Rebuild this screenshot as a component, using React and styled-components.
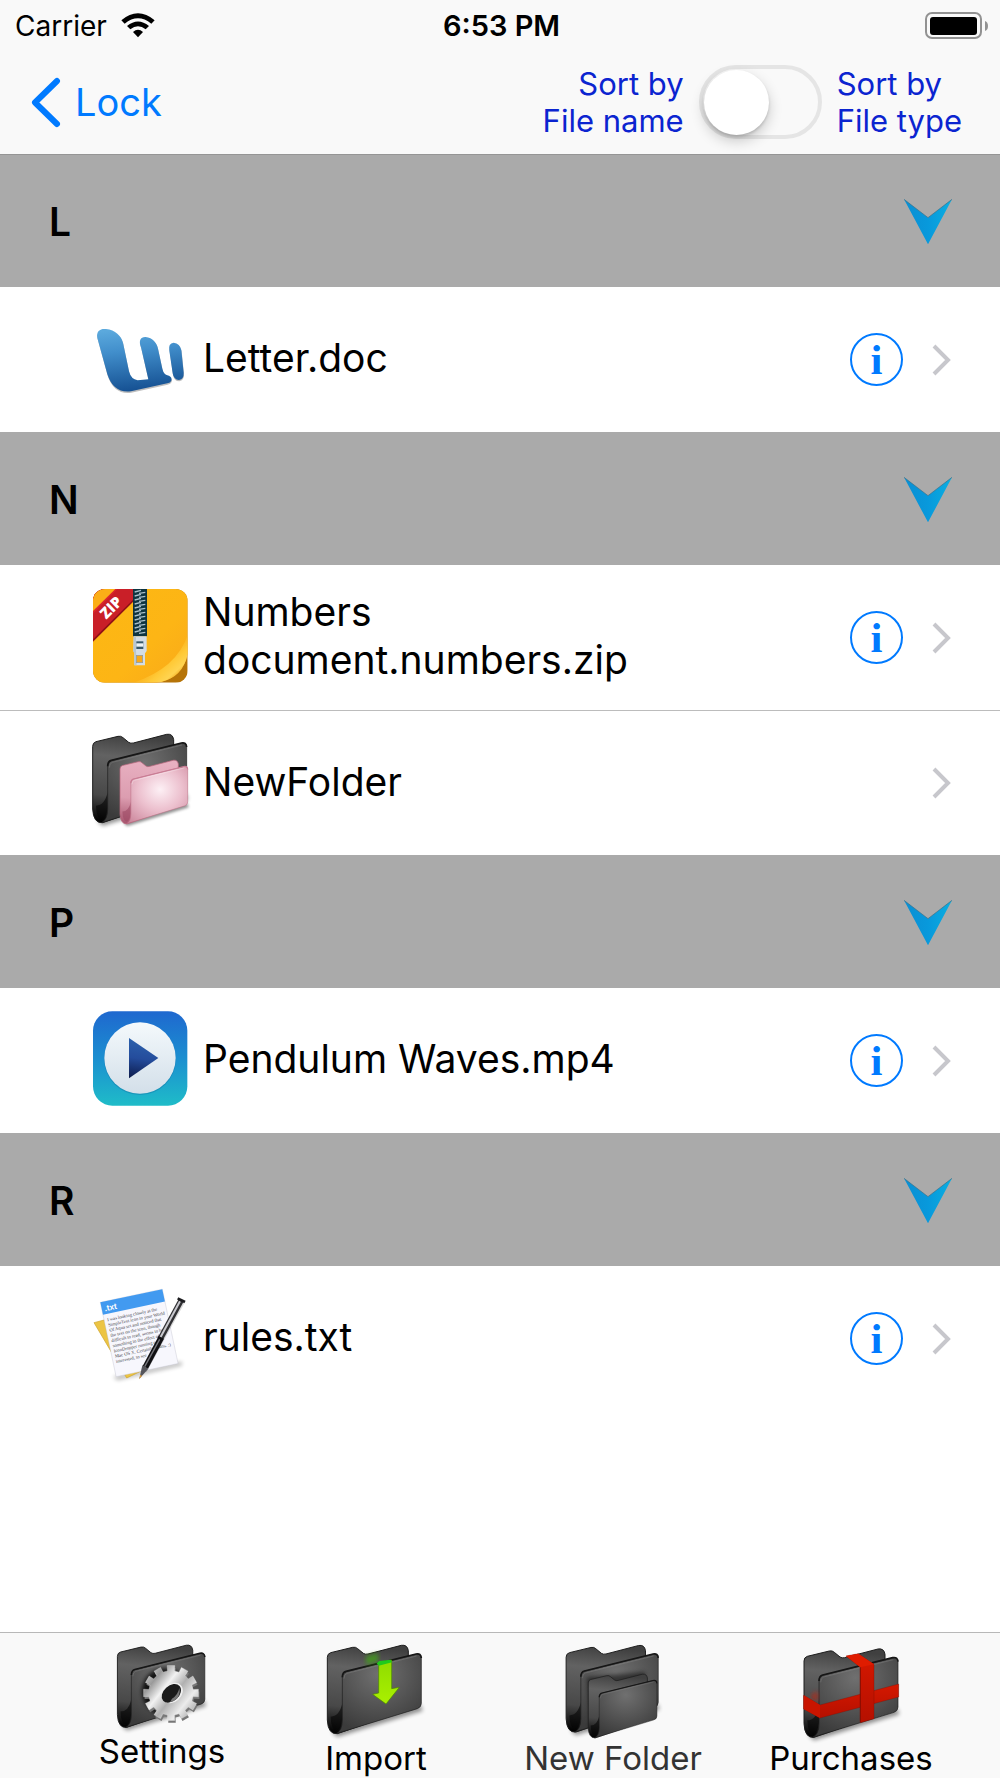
import { useState } from "react";
import styled, { createGlobalStyle } from "styled-components";

const sections = [
  { letter: "L", files: [{ name: "Letter.doc", icon: "doc", info: true }] },
  {
    letter: "N",
    files: [
      { name: "Numbers document.numbers.zip", icon: "zip", info: true },
      { name: "NewFolder", icon: "folder", info: false },
    ],
  },
  { letter: "P", files: [{ name: "Pendulum Waves.mp4", icon: "video", info: true }] },
  { letter: "R", files: [{ name: "rules.txt", icon: "text", info: true }] },
];

export default function App() {
  const [byType, setByType] = useState(false);
  const [closed, setClosed] = useState({});

  const toggleSection = (letter) => {
    setClosed({ ...closed, [letter]: !closed[letter] });
  };

  return (
    <Page>
      <GlobalStyle />
      <SharedGradients />
      <Header>
        <StatusBar>
          <Carrier>
            Carrier
            <WifiIcon />
          </Carrier>
          <Clock>6:53 PM</Clock>
          <BatteryIcon />
        </StatusBar>
        <NavBar>
          <BackButton type="button">
            <svg width="30" height="51" viewBox="0 0 30 51" fill="none">
              <path
                d="M26 4 L4 25.500 L26 47"
                stroke="#007aff"
                strokeWidth="6"
                strokeLinecap="round"
                strokeLinejoin="round"
              />
            </svg>
            Lock
          </BackButton>
          <SortControl>
            <SortLabel htmlFor="sort" $align="right">
              Sort by
              <br />
              File name
            </SortLabel>
            <Switch
              id="sort"
              type="checkbox"
              role="switch"
              checked={byType}
              onChange={(e) => setByType(e.target.checked)}
            />
            <SortLabel htmlFor="sort" $align="left">
              Sort by
              <br />
              File type
            </SortLabel>
          </SortControl>
        </NavBar>
      </Header>

      <FileList>
        {sections.map((section) => (
          <section key={section.letter}>
            <SectionHeader type="button" onClick={() => toggleSection(section.letter)}>
              {section.letter}
              <ArrowIcon />
            </SectionHeader>
            {!closed[section.letter] &&
              section.files.map((file) => (
                <FileRow key={file.name}>
                  <FileIcon type={file.icon} />
                  <FileName>{file.name}</FileName>
                  {file.info && (
                    <InfoButton type="button" aria-label={`Info for ${file.name}`}>
                      i
                    </InfoButton>
                  )}
                  <svg width="20" height="32" viewBox="0 0 20 32" fill="none">
                    <path d="M2 2 L16 16 L2 30" stroke="#c7c7cc" strokeWidth="4" />
                  </svg>
                </FileRow>
              ))}
          </section>
        ))}
      </FileList>

      <TabBar>
        <TabButton type="button">
          <SettingsIcon />
          Settings
        </TabButton>
        <TabButton type="button">
          <ImportIcon />
          Import
        </TabButton>
        <TabButton type="button" $muted>
          <NewFolderIcon />
          New Folder
        </TabButton>
        <TabButton type="button">
          <PurchasesIcon />
          Purchases
        </TabButton>
      </TabBar>
    </Page>
  );
}

// Status bar icons
function WifiIcon() {
  return (
    <svg width="34" height="25" viewBox="0 0 102 75">
      <path d="M1 22 Q51 -20 101 22 L91 32 Q51 0 11 32 Z" />
      <path d="M18 39 Q51 12 84 39 L74 49 Q51 31 28 49 Z" />
      <path d="M36 57 Q51 44 66 57 L51 73 Z" />
    </svg>
  );
}

function BatteryIcon() {
  return (
    <svg width="63" height="28" viewBox="0 0 63 28">
      <rect x="1" y="1" width="55" height="25" rx="6" fill="none" stroke="#929292" strokeWidth="2" />
      <rect x="5" y="5" width="47" height="18" rx="3" />
      <path d="M60 9 Q63 10 63 14 Q63 18 60 19 Z" fill="#929292" />
    </svg>
  );
}

function ArrowIcon() {
  return (
    <svg width="48" height="46" viewBox="0 0 144 138">
      <path d="M0 1 L72 56 L144 1 L72 136 Z" fill="url(#arrowFill)" />
      <path d="M0 1 L72 56 L144 1" fill="none" stroke="#3b6f86" strokeWidth="2" />
    </svg>
  );
}

function SharedGradients() {
  return (
    <svg width="0" height="0" display="block" aria-hidden="true">
      <defs>
        <linearGradient id="arrowFill">
          <stop offset="0" stopColor="#0b8fd2" />
          <stop offset="0.5" stopColor="#0899dc" />
          <stop offset="1" stopColor="#0aaee0" />
        </linearGradient>
        <linearGradient id="darkBack" x1="0.3" y1="0" x2="0.2" y2="1">
          <stop offset="0" stopColor="#404040" />
          <stop offset="0.25" stopColor="#626262" />
          <stop offset="0.7" stopColor="#484848" />
          <stop offset="1" stopColor="#000000" />
        </linearGradient>
        <radialGradient id="darkFront" cx="0.5" cy="0.25" r="0.75">
          <stop offset="0" stopColor="#707070" />
          <stop offset="1" stopColor="#3b3b3b" />
        </radialGradient>
        <linearGradient id="pinkBack" x1="0.3" y1="0" x2="0.2" y2="1">
          <stop offset="0" stopColor="#e8b0c1" />
          <stop offset="0.6" stopColor="#dc9db0" />
          <stop offset="1" stopColor="#a8566f" />
        </linearGradient>
        <radialGradient id="pinkFront" cx="0.55" cy="0.4" r="0.8">
          <stop offset="0" stopColor="#fdf0f5" />
          <stop offset="0.45" stopColor="#ecc0ce" />
          <stop offset="1" stopColor="#c87f95" />
        </radialGradient>
        <filter id="soft" x="-20%" y="-50%" width="140%" height="200%">
          <feGaussianBlur stdDeviation="7" />
        </filter>
      </defs>
    </svg>
  );
}

function FolderShape({ tone = "dark", shadow = true, ...rest }) {
  const pink = tone === "pink";
  const edge = pink ? "#b9687f" : "#1d1d1d";
  return (
    <g {...rest}>
      {shadow && (
        <path d="M95 335 L362 255 L368 272 L112 350 Z" fill="#000" opacity="0.45" filter="url(#soft)" />
      )}
      <path
        d="M82 112 Q82 101 92 98 L158 82 Q167 80 173 86 L190 100 Q196 104 204 102 L304 76 Q322 73 325 92 V268 L112 341 Q84 344 82 300 Z"
        fill={`url(#${tone}Back)`}
        stroke={edge}
        strokeWidth="3"
      />
      <path
        d="M92 290 Q93 330 110 332 Q124 326 127 296 V250 Q118 290 92 290 Z"
        fill={pink ? "#9d4a64" : "#050505"}
        opacity="0.6"
      />
      <path
        d="M127 170 Q127 158 138 155 L348 103 Q363 100 364 114 V250 Q364 262 352 266 L108 341 Q127 332 127 300 Z"
        fill={`url(#${tone}Front)`}
        stroke={edge}
        strokeWidth="2"
      />
      <path
        d="M127 172 Q127 157 138 154 L348 102 Q363 99 364 114"
        fill="none"
        stroke={pink ? "#c97c94" : "#161616"}
        strokeWidth="5"
      />
      <path
        d="M132 176 Q132 163 141 160 L350 108"
        fill="none"
        stroke={pink ? "#fff" : "#8b8b8b"}
        strokeWidth="2"
        opacity="0.6"
      />
    </g>
  );
}

// File icons
function FileIcon({ type }) {
  if (type === "doc") {
    return (
      <IconSvg viewBox="36 6 288 288">
        <defs>
          <linearGradient id="wordBlue" gradientUnits="userSpaceOnUse" x1="150" y1="55" x2="170" y2="245">
            <stop offset="0" stopColor="#5ba9dd" />
            <stop offset="0.35" stopColor="#418ecb" />
            <stop offset="1" stopColor="#144f91" />
          </linearGradient>
        </defs>
        <g fill="#000" opacity="0.25" transform="translate(1 4)">
          <path d="M52 84 C48 62 62 55 78 57 C106 60 124 78 129 98 L147 184 Q153 208 173 211 L205 208 L183 112 C175 92 182 80 197 81 C218 83 231 99 234 116 L247 176 Q251 195 267 197 Q277 202 274 212 Q271 218 262 220 L153 244 Q101 251 82 193 Z" />
          <path d="M268 122 Q264 99 281 98 Q300 101 304 120 L311 188 Q312 207 297 210 Q281 209 278 190 Z" />
        </g>
        <g fill="url(#wordBlue)">
          <path d="M52 84 C48 62 62 55 78 57 C106 60 124 78 129 98 L147 184 Q153 208 173 211 L205 208 L183 112 C175 92 182 80 197 81 C218 83 231 99 234 116 L247 176 Q251 195 267 197 Q277 202 274 212 Q271 218 262 220 L153 244 Q101 251 82 193 Z" />
          <path d="M268 122 Q264 99 281 98 Q300 101 304 120 L311 188 Q312 207 297 210 Q281 209 278 190 Z" />
        </g>
      </IconSvg>
    );
  }

  if (type === "zip") {
    return (
      <IconSvg viewBox="36 45 288 288">
        <defs>
          <linearGradient id="zipBody" x1="0" y1="0" x2="1" y2="1">
            <stop offset="0" stopColor="#fcb813" />
            <stop offset="0.6" stopColor="#fdb515" />
            <stop offset="1" stopColor="#f9a91a" />
          </linearGradient>
          <linearGradient id="zipCurl" gradientUnits="userSpaceOnUse" x1="225" y1="215" x2="300" y2="300">
            <stop offset="0" stopColor="#f8a618" stopOpacity="0" />
            <stop offset="0.6" stopColor="#ffc936" />
            <stop offset="0.85" stopColor="#ffd451" />
            <stop offset="1" stopColor="#f0a81c" />
          </linearGradient>
          <clipPath id="zipClip">
            <rect x="39" y="42" width="284" height="281" rx="36" />
          </clipPath>
        </defs>
        <g clipPath="url(#zipClip)">
          <rect x="39" y="42" width="284" height="281" fill="#b67408" />
          <path d="M39 42 H323 V238 Q308 306 243 321 L230 323 H39 Z" fill="url(#zipBody)" />
          <path d="M323 180 V238 Q308 306 243 321 L160 323 Q290 280 323 180 Z" fill="url(#zipCurl)" />
          <path d="M39 42 H198 L39 200 Z" fill="#8f1116" />
          <path d="M39 42 H192 L39 193 Z" fill="#c91f28" />
          <path d="M39 42 H112 L39 116 Z" fill="#dc262e" />
          <path d="M39 42 H106 L39 108 Z" fill="#fbae17" />
          <rect x="159" y="42" width="42" height="142" fill="#0e3440" />
          {[46, 58, 70, 82, 94, 106, 118, 130, 142, 154, 166].map((y) => (
            <g key={y} stroke="#a9bfca" strokeWidth="4">
              <path d={`M164 ${y + 5} L183 ${y}`} />
              <path d={`M177 ${y + 9} L196 ${y + 6}`} />
            </g>
          ))}
        </g>
        <text
          x="0"
          y="0"
          transform="translate(79 134) rotate(-45)"
          fill="#fff"
          fontFamily="Open Sans, sans-serif"
          fontSize="45"
          fontWeight="800"
        >
          ZIP
        </text>
        <path d="M161 184 H200 V228 L195 235 V271 H163 V235 L160 228 Z" fill="#d3dde6" />
        <path d="M161 184 H168 V228 L170 271 H163 V235 L160 228 Z" fill="#b8c7d3" />
        <rect x="169" y="199" width="21" height="23" fill="#37596a" />
        <rect x="169" y="205" width="21" height="10" fill="#eef4f7" />
        <rect x="169" y="241" width="19" height="22" fill="#f7a91b" stroke="#8b98a3" strokeWidth="2" />
      </IconSvg>
    );
  }

  if (type === "folder") {
    return (
      <IconSvg viewBox="36 45 288 288">
        <FolderShape transform="translate(-44 -33)" />
        <FolderShape tone="pink" transform="translate(61 66) scale(0.72)" />
      </IconSvg>
    );
  }

  if (type === "video") {
    return (
      <IconSvg viewBox="36 39 288 288">
        <defs>
          <linearGradient id="videoBg" x1="0" y1="0" x2="0" y2="1">
            <stop offset="0" stopColor="#1f68cf" />
            <stop offset="0.5" stopColor="#1b8fd0" />
            <stop offset="1" stopColor="#1fbcc8" />
          </linearGradient>
          <linearGradient id="videoDisc" x1="0" y1="0" x2="0" y2="1">
            <stop offset="0" stopColor="#f4f9fc" />
            <stop offset="1" stopColor="#d3dfe9" />
          </linearGradient>
          <linearGradient id="videoPlay" x1="0.3" y1="0" x2="0.2" y2="1">
            <stop offset="0" stopColor="#2c62ad" />
            <stop offset="0.5" stopColor="#244c9c" />
            <stop offset="1" stopColor="#0d1c4d" />
          </linearGradient>
        </defs>
        <rect x="39" y="34" width="283" height="283" rx="58" fill="url(#videoBg)" />
        <circle cx="180" cy="177" r="108" fill="#0d5d94" opacity="0.3" />
        <circle cx="180" cy="174" r="107" fill="url(#videoDisc)" />
        <path d="M147 114 L235 174 L147 235 Z" fill="url(#videoPlay)" />
      </IconSvg>
    );
  }

  return (
    <IconSvg viewBox="36 33 288 288">
      <path d="M100 290 L305 245 L306 256 L112 300 Z" fill="#000" opacity="0.3" filter="url(#soft)" />
      <path d="M42 128 L80 118 L190 270 L140 294 Z" fill="#ecc443" stroke="#cda32c" strokeWidth="2" />
      <g transform="translate(61 67) rotate(-12)">
        <rect width="190" height="228" fill="#f7f7fd" stroke="#b8b8c8" strokeWidth="1" />
        <rect width="190" height="38" fill="#429af0" />
        <text x="8" y="29" fill="#fff" fontFamily="Liberation Sans, sans-serif" fontSize="25" fontWeight="700">
          .txt
        </text>
        <g fill="#45454c" fontFamily="Liberation Serif, serif" fontSize="14">
          <text x="9" y="60">I was looking closely at the</text>
          <text x="9" y="76">SimpleText icon in your World</text>
          <text x="9" y="92">Of Aqua set and noticed that</text>
          <text x="9" y="108">the text on the icon, though</text>
          <text x="9" y="124">difficult to read, seems to be</text>
          <text x="9" y="140">something to the effect of</text>
          <text x="9" y="156">IconDropper running on</text>
          <text x="9" y="172">Mac OS X. Certainly kudos. :)</text>
          <text x="9" y="188">interested, to see</text>
        </g>
      </g>
      <path d="M305 66 L240 184 L192 272" stroke="#000" strokeWidth="18" opacity="0.15" fill="none" />
      <path d="M304 60 L240 178" stroke="#303033" strokeWidth="17" />
      <path d="M300 64 L237 180" stroke="#c9c9cf" strokeWidth="6" />
      <path d="M244 172 L196 262" stroke="#111114" strokeWidth="18" />
      <path d="M239 178 L194 260" stroke="#77777d" strokeWidth="4" />
      <path d="M187 256 L205 266 L178 296 Z" fill="#55555b" />
      <path d="M181 284 L186 288 L177 298 Z" fill="#d79a3c" />
      <path d="M293 55 L315 66" stroke="#1c1c1f" strokeWidth="8" />
    </IconSvg>
  );
}

// Tab bar icons
function gearPath(cx, cy, outer, inner, teeth) {
  const step = (Math.PI * 2) / teeth;
  const points = [];
  for (let i = 0; i < teeth; i++) {
    const a = i * step;
    [
      [inner, -0.3],
      [outer, -0.26],
      [outer, 0.26],
      [inner, 0.3],
    ].forEach(([r, t]) => {
      points.push(`${(cx + r * Math.cos(a + t * step)).toFixed(1)} ${(cy + r * Math.sin(a + t * step)).toFixed(1)}`);
    });
  }
  return `M${points.join(" L")} Z`;
}

function SettingsIcon() {
  return (
    <svg width="100" height="90" viewBox="66 63 300 270" overflow="visible">
      <defs>
        <linearGradient id="gearMetal" x1="0" y1="0.1" x2="1" y2="0.9">
          <stop offset="0" stopColor="#d9d9d9" />
          <stop offset="0.2" stopColor="#9a9a9a" />
          <stop offset="0.38" stopColor="#f2f2f2" />
          <stop offset="0.55" stopColor="#b0b0b0" />
          <stop offset="0.75" stopColor="#ececec" />
          <stop offset="1" stopColor="#969696" />
        </linearGradient>
      </defs>
      <FolderShape transform="translate(6 5) scale(0.93)" />
      <circle cx="226" cy="214" r="70" fill="#000" opacity="0.8" filter="url(#soft)" />
      <path d={gearPath(243, 222, 83, 67, 12)} fill="#777" transform="translate(3 4)" />
      <path d={gearPath(243, 219, 83, 67, 12)} fill="url(#gearMetal)" stroke="#ededed" strokeWidth="1" />
      <ellipse cx="247" cy="219" rx="35" ry="27" fill="#efefef" transform="rotate(-42 247 219)" />
      <ellipse cx="244" cy="220" rx="33" ry="23" fill="#1b1b1b" transform="rotate(-42 244 220)" />
      <path d="M246 236 Q264 225 268 204 Q272 220 262 235 Q252 245 240 246 Z" fill="#777" />
    </svg>
  );
}

function ImportIcon() {
  return (
    <svg width="100" height="97" viewBox="78 63 300 291" overflow="visible">
      <defs>
        <linearGradient id="importGreen" x1="0" y1="0" x2="0" y2="1">
          <stop offset="0" stopColor="#8fdc00" />
          <stop offset="1" stopColor="#aaf000" />
        </linearGradient>
      </defs>
      <FolderShape />
      <path d="M198 108 L235 99 V125 L198 134 Z" fill="#3fae0c" opacity="0.65" filter="url(#soft)" />
      <path d="M236 127 L275 120 V206 L298 202 L258 252 L218 223 L236 219 Z" fill="url(#importGreen)" stroke="#4b8800" strokeWidth="2" />
      <path d="M230 130 L238 123 L272 119 L276 127 L236 137 Z" fill="#1fca1c" />
    </svg>
  );
}

function NewFolderIcon() {
  return (
    <svg width="100" height="97" viewBox="159 63 300 291" overflow="visible">
      <FolderShape transform="translate(88 2) scale(0.98)" />
      <path d="M230 172 L405 156 V180 L240 325 Z" fill="#000" opacity="0.5" filter="url(#soft)" />
      <FolderShape shadow={false} transform="translate(175 108) scale(0.73 0.72)" />
    </svg>
  );
}

function PurchasesIcon() {
  return (
    <svg width="100" height="97" viewBox="153 63 300 291" overflow="visible">
      <defs>
        <linearGradient id="ribbon" x1="0" y1="0" x2="0" y2="1">
          <stop offset="0" stopColor="#d51800" />
          <stop offset="1" stopColor="#b51000" />
        </linearGradient>
      </defs>
      <FolderShape transform="translate(80 11)" />
      <path d="M184 222 L204 214 V243 L184 238 Z" fill="#e01600" opacity="0.5" filter="url(#soft)" />
      <path d="M161 226 L210 255 L446 192 V231 L210 294 L161 267 Z" fill="url(#ribbon)" stroke="#7c0b00" strokeWidth="1" />
      <path d="M210 255 V294 L161 267 V226 Z" fill="#c91500" />
      <path d="M288 108 L325 101 L372 133 V296 L331 308 V142 Z" fill="url(#ribbon)" stroke="#7c0b00" strokeWidth="1" />
      <path d="M288 108 L325 101 L372 133 L331 142 Z" fill="#df1c00" />
      <path d="M331 142 V306" stroke="#8a0d00" strokeWidth="3" />
    </svg>
  );
}

const GlobalStyle = createGlobalStyle`
  * {
    box-sizing: border-box;
  }
  body {
    margin: 0;
    background: #fff;
    color: #000;
    font-family: Inter, "Liberation Sans", sans-serif;
  }
  button {
    font: inherit;
    color: inherit;
    border: none;
    padding: 0;
    cursor: pointer;
  }
`;

const Page = styled.div`
  min-height: 100vh;
  display: flex;
  flex-direction: column;
`;

const Header = styled.header`
  position: relative;
  z-index: 1;
  background: #f9f9f9;
  box-shadow: 0 1px 0 #959595;
`;

const StatusBar = styled.div`
  height: 50px;
  padding: 1px 12px 0 15px;
  display: grid;
  grid-template-columns: 1fr auto 1fr;
  align-items: center;

  > svg {
    justify-self: end;
  }
`;

const Carrier = styled.span`
  display: flex;
  align-items: center;
  gap: 14px;
  font-size: 28px;
`;

const Clock = styled.span`
  font-size: 29px;
  font-weight: 600;
`;

const NavBar = styled.nav`
  height: 104px;
  padding: 0 38px 0 31px;
  display: flex;
  justify-content: space-between;
  align-items: center;
`;

const BackButton = styled.button`
  display: flex;
  align-items: center;
  gap: 14px;
  background: none;
  color: #007aff;
  font-size: 38px;
`;

const SortControl = styled.div`
  display: flex;
  align-items: center;
  gap: 15px;
`;

const SortLabel = styled.label`
  color: #0b24d0;
  font-size: 31px;
  line-height: 37px;
  text-align: ${(props) => props.$align};
`;

const Switch = styled.input`
  appearance: none;
  width: 123px;
  height: 74px;
  margin: 0;
  padding: 1px;
  border: 4px solid #e5e5e5;
  border-radius: 37px;
  cursor: pointer;

  &::before {
    content: "";
    display: block;
    width: 65px;
    height: 65px;
    margin-left: ${(props) => (props.checked ? "48px" : "0")};
    border-radius: 50%;
    background: #fff;
    box-shadow: 0 6px 14px rgba(0, 0, 0, 0.2), 0 2px 3px rgba(0, 0, 0, 0.15);
  }
`;

const FileList = styled.main`
  flex: 1;
`;

const SectionHeader = styled.button`
  width: 100%;
  height: 133px;
  padding: 2px 48px 0 49px;
  display: flex;
  justify-content: space-between;
  align-items: center;
  background: #aaa;
  font-size: 39px;
  font-weight: 600;
`;

const FileRow = styled.div`
  height: 145px;
  padding: 0 48px 0 92px;
  display: flex;
  align-items: center;

  & + & {
    border-top: 1px solid #bcbcbc;
  }
`;

const IconSvg = styled.svg`
  flex: none;
  width: 96px;
  height: 96px;
  overflow: visible;
`;

const FileName = styled.span`
  flex: 1;
  margin: 0 64px 0 15px;
  padding-bottom: 3px;
  font-size: 39px;
  line-height: 48px;
`;

const InfoButton = styled.button`
  flex: none;
  width: 53px;
  height: 53px;
  margin-right: 29px;
  border: 2px solid #007aff;
  border-radius: 50%;
  background: none;
  color: #007aff;
  font-family: "Liberation Serif", serif;
  font-size: 43px;
  font-weight: 700;
  line-height: 47px;
`;

const TabBar = styled.nav`
  position: sticky;
  bottom: 0;
  height: 146px;
  padding: 8px 41px 0 55px;
  display: grid;
  grid-template-columns: 214fr 214fr 260fr 216fr;
  align-items: start;
  background: #f9f9f9;
  border-top: 1px solid #b8b8b8;
`;

const TabButton = styled.button`
  display: flex;
  flex-direction: column;
  align-items: center;
  background: none;
  color: ${(props) => (props.$muted ? "#333" : "#000")};
  font-size: 33px;
  line-height: 40px;
`;
